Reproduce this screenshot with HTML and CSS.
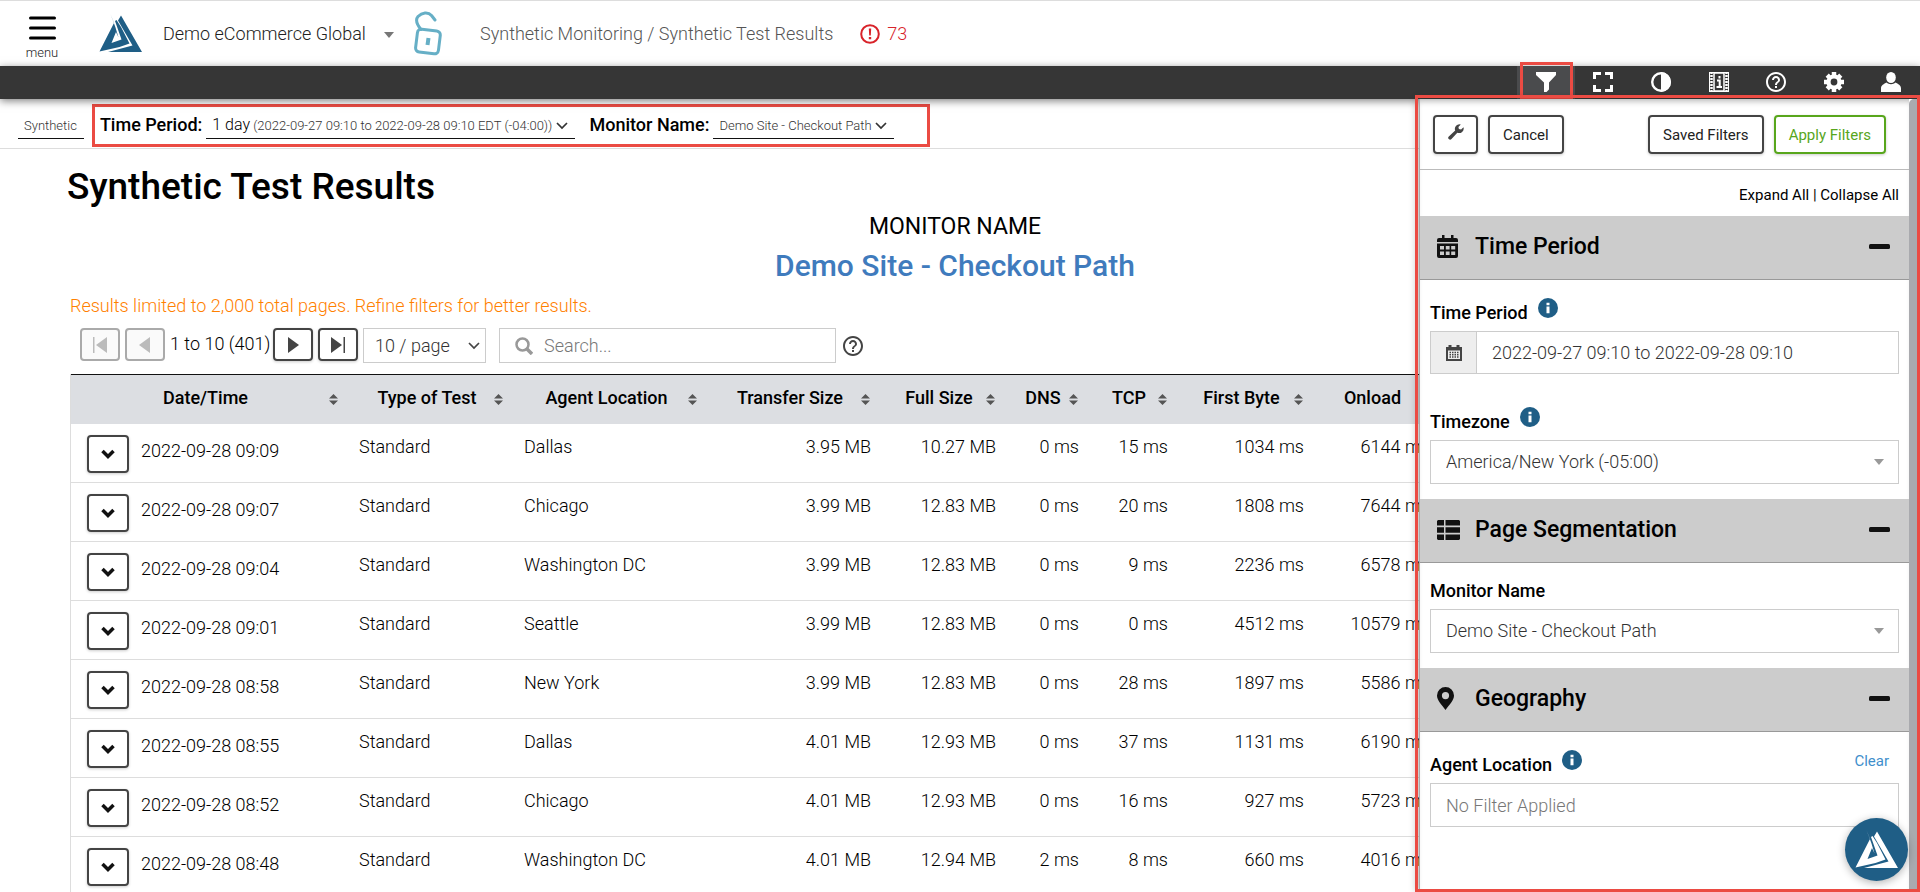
FILE: index.html
```html
<!DOCTYPE html>
<html lang="en">
<head>
    <meta charset="UTF-8">
    <meta name="viewport" content="width=device-width, initial-scale=1.0">
    <title>Synthetic Test Results</title>
    <link rel="stylesheet" href="styles.css">
</head>
<body>

<!-- Shared icons -->
<svg class="sprite" aria-hidden="true">
    <symbol id="logo" viewBox="0 0 44 39">
        <path d="M11.500 0l3.500 9L.5 37.500l20-4.500 10-3.500-8.500-16.500L17.500 6l-1.500 1 6.500 18.500-10 3.500 4.500-11 2.500 5.500-3-10z"/>
        <path d="M22 1.500L43 38H9l24.500-6.500L19 6.500z"/>
    </symbol>
    <symbol id="help" viewBox="2 2 20 20">
        <path d="M11 18h2v-2h-2v2zm1-16C6.480 2 2 6.480 2 12s4.480 10 10 10 10-4.480 10-10S17.520 2 12 2zm0 18c-4.410 0-8-3.590-8-8s3.590-8 8-8 8 3.590 8 8-3.590 8-8 8zm0-14c-2.210 0-4 1.790-4 4h2c0-1.100.9-2 2-2s2 .9 2 2c0 2-3 1.750-3 5h2c0-2.250 3-2.500 3-5 0-2.210-1.790-4-4-4z"/>
    </symbol>
    <symbol id="info" viewBox="0 0 20 20">
        <circle cx="10" cy="10" r="10"/>
        <path d="M8.500 4.800h3v2.400h-3zM8.500 8.500h3v6.700h-3z" fill="#fff"/>
    </symbol>
    <symbol id="caret" viewBox="0 0 10 6"><path d="M0 0h10L5 6z"/></symbol>
    <symbol id="chevron" viewBox="0 0 12 8"><path d="M1 1l5 5 5-5" fill="none" stroke="currentColor" stroke-width="1.700"/></symbol>
    <symbol id="sort" viewBox="0 0 9 11"><path d="M0 4.500h9L4.500 0zM0 6.500h9L4.500 11z"/></symbol>
    <symbol id="minus" viewBox="0 0 21 5"><rect width="21" height="5" rx="1.500"/></symbol>
</svg>

<header class="header">
    <button class="menu-btn" type="button">
        <svg width="27" height="24" viewBox="0 0 27 24"><path d="M1.500 2h24M1.500 12h24M1.500 22h24" stroke="#000" stroke-width="3" stroke-linecap="round"/></svg>
        <span>menu</span>
    </button>
    <a class="logo" href="#" aria-label="Home"><svg width="44" height="39"><use href="#logo"/></svg></a>
    <div class="project">
        <select class="project-select" aria-label="Project">
            <option>Demo eCommerce Global</option>
        </select>
        <svg class="project-caret" width="10" height="6"><use href="#caret"/></svg>
    </div>
    <svg class="lock" width="28" height="46" viewBox="0 0 28 46" fill="none" stroke="#66afc6" stroke-width="3" stroke-linecap="round" stroke-linejoin="round">
        <path d="M7 18.500C2.500 13 1 9 4 5.500 8 1.500 14 .5 17.500 4.500l3.500 4.500"/>
        <rect x="2.500" y="19" width="23" height="23" rx="4" transform="rotate(7 14 30)"/>
        <path d="M14.500 27l-1 7" stroke-width="4" stroke-linecap="butt"/>
    </svg>
    <nav class="breadcrumb">Synthetic Monitoring / Synthetic Test Results</nav>
    <a class="alerts" href="#">
        <svg width="20" height="20" viewBox="0 0 20 20"><circle cx="10" cy="10" r="8.800" fill="none" stroke="currentColor" stroke-width="2"/><path d="M8.800 4.500h2.400l-.4 7H9.200zM8.800 13h2.400v2.300H8.800z" fill="currentColor"/></svg>
        <span>73</span>
    </a>
</header>

<div class="toolbar">
    <div class="tools">
        <button class="tool active" type="button" aria-label="Filter"><svg width="20" height="20" viewBox="0 0 20 20"><path d="M0 0h20v3l-7 7.500v7L10.500 20H8v-9.500L0 3z"/></svg></button>
        <button class="tool" type="button" aria-label="Full screen"><svg width="20" height="20" viewBox="0 0 20 20"><path d="M1.500 7V1.500H8M12 1.500h6.500V7M18.500 13v5.500H12M8 18.500H1.500V13" fill="none" stroke="#fff" stroke-width="3"/></svg></button>
        <button class="tool" type="button" aria-label="Contrast"><svg width="20" height="20" viewBox="0 0 20 20"><circle cx="10" cy="10" r="8.800" fill="none" stroke="#fff" stroke-width="2.400"/><path d="M10 0a10 10 0 0 1 0 20z"/></svg></button>
        <button class="tool" type="button" aria-label="Tour"><svg width="20" height="20" viewBox="0 0 20 20" fill="none" stroke="#fff"><path d="M5 1h10v18H5z" stroke-width="1.500"/><path d="M2.500 0v20M17.500 0v20" stroke-width="2.500" stroke-dasharray="2 1"/><path d="M.5 0v20M19.500 0v20M0 .5h20M0 19.500h20"/><path d="M10.500 4v2.500M8 8.500h2.700V15M7.500 15h5.500" stroke-width="2"/></svg></button>
        <button class="tool" type="button" aria-label="Help"><svg width="20" height="20"><use href="#help"/></svg></button>
        <button class="tool" type="button" aria-label="Settings"><svg width="20" height="20" viewBox="0 0 20 20"><path d="M10 0v20M0 10h20M3.200 3.200l13.600 13.600M16.800 3.200L3.200 16.800" stroke="#fff" stroke-width="4.500"/><circle cx="10" cy="10" r="7.600"/><circle cx="10" cy="10" r="3.400" fill="#363636"/></svg></button>
        <button class="tool" type="button" aria-label="Account"><svg width="20" height="20" viewBox="0 0 20 20"><ellipse cx="10" cy="5.500" rx="4.800" ry="5.500"/><path d="M0 20v-3.500C0 13 3 12 5.500 10.500c2.500 2.200 6.500 2.200 9 0C17 12 20 13 20 16.500V20z"/></svg></button>
    </div>
</div>

<div class="page">
    <div class="filter-bar">
        <button class="filter-link small" type="button">Synthetic</button>
        <div class="filter-group">
            <strong>Time Period:</strong>
            <button class="filter-link" type="button"><span class="period">1 day</span> (2022-09-27 09:10 to 2022-09-28 09:10 EDT (-04:00)) <svg width="12" height="8"><use href="#chevron"/></svg></button>
            <strong class="second">Monitor Name:</strong>
            <button class="filter-link" type="button">Demo Site - Checkout Path <svg width="12" height="8"><use href="#chevron"/></svg></button>
        </div>
    </div>

    <main class="content">
        <h1>Synthetic Test Results</h1>
        <div class="monitor">
            <div class="monitor-label">MONITOR NAME</div>
            <a class="monitor-name" href="#">Demo Site - Checkout Path</a>
        </div>
        <div class="results-area">
            <p class="warning">Results limited to 2,000 total pages. Refine filters for better results.</p>

            <div class="pager">
                <button class="page-btn" type="button" disabled aria-label="First page"><svg width="14" height="16" viewBox="0 0 14 16"><path d="M0 0h1.500v16H0zM14 0v16L3 8z"/></svg></button>
                <button class="page-btn" type="button" disabled aria-label="Previous page"><svg width="12" height="16" viewBox="0 0 12 16"><path d="M11 0v16L0 8z"/></svg></button>
                <span class="range">1 to 10 (401)</span>
                <button class="page-btn" type="button" aria-label="Next page"><svg width="12" height="16" viewBox="0 0 12 16"><path d="M1 0v16l11-8z"/></svg></button>
                <button class="page-btn" type="button" aria-label="Last page"><svg width="14" height="16" viewBox="0 0 14 16"><path d="M12.500 0H14v16h-1.500zM0 0v16l11-8z"/></svg></button>
                <div class="page-size">
                    <select aria-label="Rows per page">
                        <option>10 / page</option>
                    </select>
                    <svg width="12" height="8"><use href="#chevron"/></svg>
                </div>
                <div class="search">
                    <svg width="18" height="18" viewBox="0 0 18 18" fill="none" stroke="#999"><circle cx="7.500" cy="7.500" r="6" stroke-width="2.500"/><path d="M12 12l5 5" stroke-width="3.500"/></svg>
                    <input type="text" placeholder="Search..." aria-label="Search">
                </div>
                <button class="help-btn" type="button" aria-label="Search help"><svg width="20" height="20"><use href="#help"/></svg></button>
            </div>

            <table class="results">
                <colgroup>
                    <col class="col-date"><col class="col-type"><col class="col-agent"><col class="col-transfer"><col class="col-full">
                    <col class="col-dns"><col class="col-tcp"><col class="col-byte"><col class="col-onload">
                </colgroup>
                <thead>
                    <tr>
                        <th>Date/Time<svg><use href="#sort"/></svg></th>
                        <th>Type of Test<svg><use href="#sort"/></svg></th>
                        <th>Agent Location<svg><use href="#sort"/></svg></th>
                        <th>Transfer Size<svg><use href="#sort"/></svg></th>
                        <th>Full Size<svg><use href="#sort"/></svg></th>
                        <th>DNS<svg><use href="#sort"/></svg></th>
                        <th>TCP<svg><use href="#sort"/></svg></th>
                        <th>First Byte<svg><use href="#sort"/></svg></th>
                        <th>Onload<svg><use href="#sort"/></svg></th>
                    </tr>
                </thead>
                <tbody id="resultRows"></tbody>
            </table>
        </div>
    </main>

    <aside class="panel">
        <div class="panel-body">
            <div class="panel-actions">
                <button class="btn icon-btn" type="button" aria-label="Configure"><svg width="16" height="16" viewBox="0 0 16 16"><path d="M15.500 3.200a4.600 4.600 0 0 1-6.200 5.500l-5.800 6.400a1.900 1.900 0 0 1-2.700-2.700l6.400-5.800A4.600 4.600 0 0 1 12.800.5L10.400 2.900l.5 2.200 2.200.5z"/></svg></button>
                <button class="btn" type="button">Cancel</button>
                <button class="btn push" type="button">Saved Filters</button>
                <button class="btn apply" type="button">Apply Filters</button>
            </div>
            <div class="panel-links"><a href="#">Expand All</a> | <a href="#">Collapse All</a></div>

            <h2 class="section">
                <svg class="section-icon" width="24" height="23" viewBox="0 0 24 23"><path d="M5 0h2.500v3H14V0h2.500v3H19a2 2 0 0 1 2 2v2H0V5a2 2 0 0 1 2-2h3zM0 8.500h21V21a2 2 0 0 1-2 2H2a2 2 0 0 1-2-2z"/><path d="M3 11h4v3.500H3zM8.800 11h3.800v3.500H8.800zM14.200 11h4v3.500h-4zM3 16.500h4V20H3zM8.800 16.500h3.800V20H8.800zM14.200 16.500h4V20h-4z" fill="#ccc"/></svg>
                Time Period
                <button type="button" aria-label="Collapse Time Period"><svg width="21" height="5"><use href="#minus"/></svg></button>
            </h2>
            <div class="fields">
                <div class="field">
                    <div class="field-head with-info"><label for="period">Time Period</label><svg class="info" width="20" height="20"><use href="#info"/></svg></div>
                    <div class="date-input">
                        <span class="addon"><svg width="16" height="16" viewBox="0 0 16 16"><path d="M2.500 0h3v2h5V0h3v2H16v14H0V2h2.500z"/><path d="M2 5.500h12V14H2z" fill="#eee"/><path d="M3.500 7.500h9M3.500 9.750h9M3.500 12h9" stroke="#444" stroke-width="1.500" stroke-dasharray="1.500 1"/></svg></span>
                        <input id="period" type="text" value="2022-09-27 09:10 to 2022-09-28 09:10">
                    </div>
                </div>
                <div class="field">
                    <div class="field-head with-info"><label for="timezone">Timezone</label><svg class="info" width="20" height="20"><use href="#info"/></svg></div>
                    <div class="select-box">
                        <select id="timezone"><option>America/New York (-05:00)</option></select>
                        <svg width="10" height="6"><use href="#caret"/></svg>
                    </div>
                </div>
            </div>

            <h2 class="section">
                <svg class="section-icon" width="24" height="20" viewBox="0 0 24 20"><path d="M1 0h6v5.500H0V1zM8.500 0H22l1 1v4.500H8.500zM0 7.200h7v5.500H0zM8.500 7.200H23v5.500H8.500zM0 14.500h7V20H1l-1-1zM8.500 14.500H23V19l-1 1H8.500z"/></svg>
                Page Segmentation
                <button type="button" aria-label="Collapse Page Segmentation"><svg width="21" height="5"><use href="#minus"/></svg></button>
            </h2>
            <div class="fields">
                <div class="field">
                    <div class="field-head"><label for="monitor">Monitor Name</label></div>
                    <div class="select-box">
                        <select id="monitor"><option>Demo Site - Checkout Path</option></select>
                        <svg width="10" height="6"><use href="#caret"/></svg>
                    </div>
                </div>
            </div>

            <h2 class="section">
                <svg class="section-icon" width="24" height="23" viewBox="0 0 24 23"><path fill-rule="evenodd" d="M8.500 0A8.500 8.500 0 0 0 0 8.500C0 13 4 17 8.500 23 13 17 17 13 17 8.500A8.500 8.500 0 0 0 8.500 0zm0 5a3.600 3.600 0 1 1 0 7.200 3.600 3.600 0 0 1 0-7.200z"/></svg>
                Geography
                <button type="button" aria-label="Collapse Geography"><svg width="21" height="5"><use href="#minus"/></svg></button>
            </h2>
            <div class="fields">
                <div class="field">
                    <div class="field-head with-info"><label for="agent">Agent Location</label><svg class="info" width="20" height="20"><use href="#info"/></svg><a class="clear" href="#">Clear</a></div>
                    <input id="agent" class="text-input" type="text" placeholder="No Filter Applied">
                </div>
            </div>
        </div>
        <div class="scroll-thumb"></div>
        <button class="fab" type="button" aria-label="Resource center"><svg width="44" height="39"><use href="#logo"/></svg></button>
    </aside>
</div>

<script>
    const results = [
        ['09:09', 'Dallas', '3.95 MB', '10.27 MB', 0, 15, 1034, 6144],
        ['09:07', 'Chicago', '3.99 MB', '12.83 MB', 0, 20, 1808, 7644],
        ['09:04', 'Washington DC', '3.99 MB', '12.83 MB', 0, 9, 2236, 6578],
        ['09:01', 'Seattle', '3.99 MB', '12.83 MB', 0, 0, 4512, 10579],
        ['08:58', 'New York', '3.99 MB', '12.83 MB', 0, 28, 1897, 5586],
        ['08:55', 'Dallas', '4.01 MB', '12.93 MB', 0, 37, 1131, 6190],
        ['08:52', 'Chicago', '4.01 MB', '12.93 MB', 0, 16, 927, 5723],
        ['08:48', 'Washington DC', '4.01 MB', '12.94 MB', 2, 8, 660, 4016]
    ];

    const tableBody = document.getElementById('resultRows');
    results.forEach(([time, agent, transfer, full, ...timings]) => {
        const row = document.createElement('tr');
        row.innerHTML = `
            <td><div class="date-cell">
                <button class="expand-btn" type="button" aria-label="Show details"><svg width="14" height="10" viewBox="0 0 14 10"><path d="M1.500 2L7 7.500 12.500 2" fill="none" stroke="#111" stroke-width="3.500"/></svg></button>
                <span>2022-09-28 ${time}</span>
            </div></td>
            <td>Standard</td>
            <td>${agent}</td>
            <td class="num">${transfer}</td>
            <td class="num">${full}</td>
            ${timings.map(ms => `<td class="num">${ms} ms</td>`).join('')}
        `;
        tableBody.appendChild(row);
    });
</script>

</body>
</html>
```
FILE: styles.css
```css
* {
    box-sizing: border-box;
}
body {
    margin: 0;
    height: 100vh;
    display: flex;
    flex-direction: column;
    overflow: hidden;
    font-family: Roboto, "Liberation Sans", sans-serif;
    font-size: 18px;
    font-weight: 300;
    line-height: 24px;
    color: #000;
    background: #fff;
}
button, input, select {
    font: inherit;
    color: inherit;
}
button {
    background: none;
    border: none;
    padding: 0;
    cursor: pointer;
}
select {
    appearance: none;
    background: #fff;
    border-radius: 0;
}
a {
    color: inherit;
    text-decoration: none;
}
svg {
    flex: none;
}
.sprite {
    position: absolute;
    width: 0;
    height: 0;
}

/* Header */
.header {
    flex: none;
    display: flex;
    align-items: center;
    height: 66px;
    padding-left: 20px;
    border-top: 1px solid #ddd;
}
.menu-btn {
    width: 44px;
    display: flex;
    flex-direction: column;
    align-items: center;
    gap: 5px;
    padding-top: 10px;
    font-size: 13px;
    line-height: 16px;
    color: #222;
}
.logo {
    display: flex;
    margin-left: 35px;
    fill: #1f5e86;
}
.project {
    position: relative;
    margin-left: 20px;
}
.project-select {
    width: 233px;
    padding: 0;
    border: none;
    color: #222;
}
.project-caret {
    position: absolute;
    right: 2px;
    top: 10px;
    fill: #777;
}
.lock {
    margin-left: 18px;
}
.breadcrumb {
    margin-left: 38px;
    color: #555;
}
.alerts {
    display: flex;
    align-items: center;
    gap: 7px;
    margin-left: 27px;
    color: #d8232a;
}

/* Toolbar */
.toolbar {
    flex: none;
    display: flex;
    justify-content: flex-end;
    height: 33px;
    background: #363636;
    box-shadow: 0 2px 8px rgba(0, 0, 0, 0.5);
    position: relative;
    z-index: 1;
}
.tools {
    display: flex;
    width: 403px;
}
.tool {
    flex: 1;
    display: flex;
    align-items: center;
    justify-content: center;
    padding-bottom: 2px;
    fill: #fff;
    position: relative;
}
.tool.active {
    background: #4a4b4d;
}
.tool.active::after {
    content: "";
    position: absolute;
    inset: -4px 2px 0 3px;
    border: 3px solid #eb4b43;
}

/* Filter bar */
.page {
    flex: 1;
    min-height: 0;
    position: relative;
}
.filter-bar {
    display: flex;
    align-items: center;
    height: 50px;
    padding: 5px 0 2px 18px;
    border-bottom: 1px solid #ddd;
}
.filter-group {
    display: flex;
    align-items: center;
    height: 43px;
    width: 838px;
    margin-left: 8px;
    padding-left: 5px;
    border: 3px solid #eb4b43;
}
.filter-group strong {
    font-weight: 500;
    margin-right: 4px;
}
.filter-group .second {
    margin-left: 15px;
}
.filter-link {
    padding: 2px 7px 0 6px;
    border-bottom: 1px solid #111;
    font-size: 13px;
    color: #333;
}
.period {
    font-size: 16px;
    color: #000;
}

/* Content */
.content {
    padding-left: 67px;
}
h1 {
    margin: 0;
    padding-top: 16px;
    font-size: 37px;
    font-weight: 500;
    line-height: 44px;
}
.monitor {
    text-align: center;
    padding: 5px 10px 0 0;
    margin-left: -67px;
}
.monitor-label {
    font-size: 23px;
    font-weight: 400;
    line-height: 26px;
}
.monitor-name {
    display: block;
    margin-top: 8px;
    font-size: 30px;
    font-weight: 500;
    line-height: 36px;
    color: #3f7bbd;
}
.results-area {
    padding-left: 3px;
}
.warning {
    margin: 10px 0;
    color: #ff8000;
}
.pager {
    display: flex;
    gap: 5px;
    height: 35px;
    padding-left: 10px;
    margin-bottom: 11px;
}
.range {
    width: 98px;
    padding-top: 4px;
    white-space: nowrap;
}
.page-btn {
    width: 40px;
    height: 33px;
    display: flex;
    align-items: center;
    justify-content: center;
    border: 2px solid #444;
    border-radius: 4px;
    fill: #444;
    box-shadow: 0 1px 3px rgba(0, 0, 0, 0.2);
}
.page-btn:disabled {
    border-color: #aaa;
    fill: #bbb;
    box-shadow: none;
    background: #fafafa;
}
.page-size {
    position: relative;
}
.page-size select {
    width: 123px;
    height: 35px;
    padding: 0 11px;
    border: 1px solid #ccc;
    color: #333;
}
.page-size svg {
    position: absolute;
    right: 6px;
    top: 14px;
    color: #444;
}
.search {
    display: flex;
    align-items: center;
    width: 337px;
    margin-left: 8px;
    padding-left: 15px;
    gap: 11px;
    border: 1px solid #ccc;
}
.search input {
    width: 100%;
    border: none;
    padding: 0;
}
::placeholder {
    color: #777;
    opacity: 1;
}
.help-btn {
    display: flex;
    align-items: center;
    margin-left: 2px;
    fill: #444;
}

/* Results table */
.results {
    border-collapse: separate;
    border-spacing: 0;
    border-left: 1px solid #ddd;
    table-layout: fixed;
    width: 1370px;
    white-space: nowrap;
}
.col-date { width: 278px; }
.col-type { width: 165px; }
.col-agent { width: 194px; }
.col-transfer { width: 173px; }
.col-full { width: 125px; }
.col-dns { width: 83px; }
.col-tcp { width: 89px; }
.col-byte { width: 136px; }
.col-onload { width: 126px; }
th {
    position: relative;
    height: 50px;
    padding: 0 19px 4px 10px;
    background: #dcdee2;
    border-top: 1px solid #111;
    font-weight: 500;
}
th svg {
    position: absolute;
    right: 11px;
    top: 19px;
    width: 9px;
    height: 11px;
    fill: #555;
}
td {
    height: 59px;
    padding: 11px 10px 0;
    vertical-align: top;
    border-bottom: 1px solid #ddd;
}
td.num {
    text-align: right;
}
.date-cell {
    display: flex;
    gap: 12px;
    padding-left: 6px;
}
.date-cell span {
    padding-top: 4px;
}
.expand-btn {
    width: 42px;
    height: 38px;
    display: flex;
    align-items: center;
    justify-content: center;
    border: 2px solid #444;
    border-radius: 4px;
    box-shadow: 0 1px 3px rgba(0, 0, 0, 0.2);
}

/* Filter panel */
.panel {
    position: absolute;
    top: 0;
    right: 0;
    bottom: 0;
    width: 501px;
    display: flex;
    padding-right: 3px;
    background: #fff;
    border-left: 1px solid #aaa;
    box-shadow: -2px 0 8px rgba(0, 0, 0, 0.3);
    z-index: 2;
}
.panel::after {
    content: "";
    position: absolute;
    inset: -4px 0 0 -5px;
    border: 3px solid #eb4b43;
    pointer-events: none;
}
.panel-body {
    flex: 1;
    overflow: hidden;
    box-shadow: inset 0 6px 6px -4px rgba(0, 0, 0, 0.3);
}
.scroll-thumb {
    width: 8px;
    background: #a9aaae;
    border-radius: 5px 0 0 0;
}
.panel-actions {
    display: flex;
    gap: 10px;
    padding: 16px 23px 15px 13px;
    border-bottom: 1px solid #bbb;
}
.btn {
    height: 39px;
    padding: 0 13px;
    border: 2px solid #444;
    border-radius: 4px;
    font-size: 15px;
    font-weight: 400;
    line-height: 20px;
    color: #222;
    box-shadow: 0 1px 3px rgba(0, 0, 0, 0.2);
}
.icon-btn {
    width: 45px;
    fill: #444;
}
.push {
    margin-left: auto;
}
.apply {
    border-color: #58a61c;
    color: #58a61c;
}
.panel-links {
    padding: 13px 10px 9px;
    text-align: right;
    font-size: 15px;
    font-weight: 400;
}
.section {
    display: flex;
    align-items: center;
    height: 64px;
    margin: 0;
    padding: 0 19px 2px 17px;
    background: #ccc;
    border-bottom: 1px solid #999;
    font-size: 23px;
    font-weight: 500;
}
.section-icon {
    margin-right: 14px;
    fill: #111;
}
.section button {
    display: flex;
    margin-left: auto;
    fill: #111;
}
.fields {
    padding: 0 10px 15px;
}
.field + .field {
    margin-top: 15px;
}
.field-head {
    display: flex;
    padding: 16px 0 6px;
}
.field-head.with-info {
    padding-top: 21px;
}
.field-head label {
    font-weight: 500;
}
.info {
    margin-left: 10px;
    margin-top: -3px;
    fill: #1f5e86;
}
.clear {
    margin: -4px 10px 0 auto;
    font-size: 15px;
    font-weight: 400;
    color: #3f8fcc;
}
.date-input {
    display: flex;
    border: 1px solid #ccc;
}
.addon {
    width: 46px;
    display: flex;
    align-items: center;
    justify-content: center;
    background: #eee;
    border-right: 1px solid #ccc;
    fill: #444;
}
.date-input input {
    flex: 1;
    height: 41px;
    padding: 0 15px;
    border: none;
    color: #333;
}
.select-box {
    position: relative;
}
.select-box select, .text-input {
    display: block;
    width: 100%;
    height: 44px;
    padding: 0 15px;
    border: 1px solid #ccc;
    color: #333;
}
.select-box svg {
    position: absolute;
    right: 15px;
    top: 19px;
    fill: #999;
}
.fab {
    position: absolute;
    right: 12px;
    bottom: 11px;
    width: 63px;
    height: 63px;
    display: flex;
    align-items: center;
    justify-content: center;
    border-radius: 50%;
    background: #1f5e86;
    fill: #fff;
    box-shadow: 0 2px 8px rgba(0, 0, 0, 0.3);
}
```
